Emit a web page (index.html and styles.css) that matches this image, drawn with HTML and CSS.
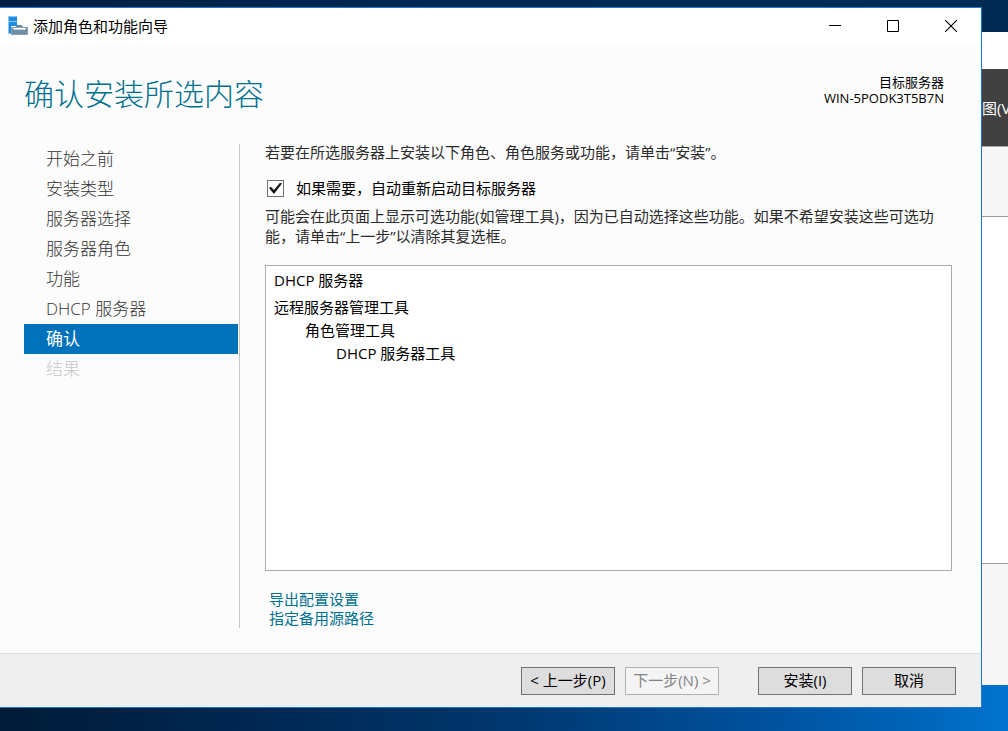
FILE: index.html
```html
<!DOCTYPE html>
<html lang="zh-CN">
<head>
<meta charset="utf-8">
<title>添加角色和功能向导</title>
<link rel="stylesheet" href="styles.css">
</head>
<body class="desktop">
  <div class="manager">
    <div class="manager-title"></div>
    <div class="manager-menu"><span class="manager-menu-item">图(V)</span></div>
    <div class="manager-toolbar"></div>
    <div class="manager-main"></div>
    <div class="manager-bottom"></div>
  </div>

  <main class="wizard">
    <div class="titlebar">
      <svg class="app-icon" width="20" height="20" viewBox="0 0 20 20" aria-hidden="true">
        <path fill="#8cc8f2" d="M0 0h9v18H0z"/>
        <path fill="#1d8ce0" d="M1 1h8v4H1zM1 6h8v11H1z"/>
        <path fill="#fff" d="M3 10h6v8H3z"/>
        <path fill="#8ba3b6" d="M3 11h17v8H3z"/>
        <path fill="#6f8da5" d="M9 9h5v1h1v1H8v-1h1zM4 12h15v6H4z"/>
        <path fill="#fff" d="M5 12h13v1H5zM6 13h1v1H6zM16 13h1v1h-1z"/>
        <path fill="#c5d0d9" d="M7 13h9v1H7z"/>
      </svg>
      <span class="titlebar-text">添加角色和功能向导</span>
      <div class="window-buttons">
        <button class="window-button" type="button" aria-label="最小化">
          <svg width="12" height="12" viewBox="0 0 12 12"><path fill="#000" d="M0 5h12v1H0z"/></svg>
        </button>
        <button class="window-button" type="button" aria-label="最大化">
          <svg width="12" height="12" viewBox="0 0 12 12"><path fill="none" stroke="#000" d="M.5.5h11v11H.5z"/></svg>
        </button>
        <button class="window-button" type="button" aria-label="关闭">
          <svg width="12" height="12" viewBox="0 0 12 12"><path fill="none" stroke="#000" stroke-width="1.1" d="M0 0l12 12M12 0L0 12"/></svg>
        </button>
      </div>
    </div>

    <header class="header">
      <h1 class="page-title">确认安装所选内容</h1>
      <div class="target">
        <div>目标服务器</div>
        <div>WIN-5PODK3T5B7N</div>
      </div>
    </header>

    <div class="body">
      <nav class="steps">
        <a class="step" href="#">开始之前</a>
        <a class="step" href="#">安装类型</a>
        <a class="step" href="#">服务器选择</a>
        <a class="step" href="#">服务器角色</a>
        <a class="step" href="#">功能</a>
        <a class="step" href="#">DHCP 服务器</a>
        <a class="step step-current" href="#" aria-current="step">确认</a>
        <a class="step step-disabled" aria-disabled="true">结果</a>
      </nav>

      <section class="content">
        <p class="text">若要在所选服务器上安装以下角色、角色服务或功能，请单击“安装”。</p>
        <label class="restart" for="restart">
          <input class="checkbox" type="checkbox" id="restart" checked>
          <span>如果需要，自动重新启动目标服务器</span>
        </label>
        <p class="text">可能会在此页面上显示可选功能(如管理工具)，因为已自动选择这些功能。如果不希望安装这些可选功能，请单击“上一步”以清除其复选框。</p>
        <ul class="selection">
          <li class="selection-group">DHCP 服务器</li>
          <li>远程服务器管理工具
            <ul class="selection-sub">
              <li>角色管理工具
                <ul class="selection-sub">
                  <li>DHCP 服务器工具</li>
                </ul>
              </li>
            </ul>
          </li>
        </ul>
        <div class="links">
          <a class="link" href="#">导出配置设置</a>
          <a class="link" href="#">指定备用源路径</a>
        </div>
      </section>
    </div>

    <footer class="footer">
      <div class="button-group">
        <button class="button" type="button">&lt; 上一步(P)</button>
        <button class="button" type="button" disabled>下一步(N) &gt;</button>
      </div>
      <div class="button-group">
        <button class="button" type="button">安装(I)</button>
        <button class="button" type="button">取消</button>
      </div>
    </footer>
  </main>
</body>
</html>
```

FILE: styles.css
```css
* {
  box-sizing: border-box;
}

.desktop {
  position: relative;
  height: 100vh;
  margin: 0;
  overflow: hidden;
  background:
    linear-gradient(90deg, #001f42 0%, #002a55 50%, #002b55 100%) top / 100% 50% no-repeat,
    linear-gradient(90deg, #001b38 0%, #002752 25%, #00356b 48%, #00509c 75%, #0066bb 92%, #0074d0 100%) bottom / 100% 50% no-repeat;
  color: #000;
  font: 15px/20px "Open Sans", "Noto Sans CJK SC", sans-serif;
}

/* Server manager window in the background */
.manager {
  position: absolute;
  inset: 32px 0 46px;
  display: flex;
  flex-direction: column;
  align-items: stretch;
  background: #f7f7f7;
}

.manager-title {
  height: 37px;
  background: #fff;
}

.manager-menu {
  display: flex;
  align-items: center;
  justify-content: flex-end;
  height: 77px;
  overflow: hidden;
  background: #414141;
  color: #fff;
}

.manager-menu-item {
  width: 26px;
  white-space: nowrap;
}

.manager-toolbar {
  height: 71px;
  border-top: 1px solid #a6a6a6;
  border-bottom: 1px solid #999;
}

.manager-main {
  flex: 1;
  border-bottom: 1px solid #999;
  background: #fff;
}

.manager-bottom {
  height: 121px;
}

/* Wizard window */
.wizard {
  position: absolute;
  inset: 7px 26px 23px 0;
  display: flex;
  flex-direction: column;
  border: 1px solid #1c78c8;
  border-left: 0;
  background: #fcfcfc;
}

.titlebar {
  display: flex;
  align-items: center;
  height: 37px;
  padding: 0 1px 1px 8px;
  background: #fff;
}

.app-icon {
  margin-right: 5px;
}

.titlebar-text {
  flex: 1;
}

.window-buttons {
  display: flex;
}

.window-button {
  display: grid;
  place-items: center;
  width: 58px;
  height: 36px;
  padding: 0;
  border: 0;
  background: none;
}

.header {
  display: flex;
  justify-content: space-between;
  padding: 29px 37px 28px 24px;
}

.page-title {
  margin: 0;
  color: #00708f;
  font-size: 30px;
  font-weight: 300;
  line-height: 40px;
}

.target {
  font-size: 13px;
  line-height: 16px;
  text-align: right;
}

.body {
  display: flex;
  flex: 1;
  padding: 0 29px 25px 24px;
}

.steps {
  width: 216px;
  margin-top: 2px;
  padding-right: 1px;
  border-right: 1px solid #c8c8c8;
}

.step {
  display: block;
  padding-left: 22px;
  color: #333;
  font-size: 17px;
  font-weight: 300;
  line-height: 30px;
  text-decoration: none;
}

.step-current {
  background: #0072bc;
  color: #fff;
  font-weight: 400;
}

.step-disabled {
  color: #c8c8c8;
}

.content {
  display: flex;
  flex: 1;
  flex-direction: column;
  padding-left: 25px;
}

.text {
  margin: 0;
  padding-right: 10px;
  color: #2b2b2b;
}

.restart {
  display: flex;
  align-items: center;
  gap: 12px;
  margin: 16px 0 8px;
  padding-left: 2px;
}

.checkbox {
  display: grid;
  place-items: center;
  width: 17px;
  height: 17px;
  margin: 0;
  border: 1px solid #707070;
  background: #fff;
  appearance: none;
}

.checkbox:checked::before {
  width: 13px;
  height: 11px;
  background: #1a1a1a;
  clip-path: polygon(0 50%, 15% 38%, 38% 68%, 86% 0, 100% 10%, 42% 100%, 34% 100%);
  content: "";
}

.selection,
.selection-sub {
  margin: 0;
  padding: 0;
  list-style: none;
}

.selection {
  flex: 1;
  margin-top: 19px;
  padding: 3px 8px;
  border: 1px solid #acacac;
  background: #fff;
  line-height: 23px;
}

.selection-group {
  margin-bottom: 4px;
}

.selection-sub {
  padding-left: 31px;
}

.links {
  display: flex;
  flex-direction: column;
  align-items: flex-start;
  margin-top: 19px;
  padding-left: 4px;
  line-height: 19px;
}

.link {
  color: #00708f;
  text-decoration: none;
}

.footer {
  display: flex;
  justify-content: flex-end;
  gap: 39px;
  padding: 13px 25px 12px;
  border-top: 1px solid #dfdfdf;
  background: #efefef;
}

.button-group {
  display: flex;
  gap: 10px;
}

.button {
  width: 94px;
  height: 28px;
  padding: 0 0 2px;
  border: 1px solid #707070;
  background: #ddd;
  color: #000;
  font: inherit;
  white-space: nowrap;
}

.button:disabled {
  border-color: #adb2b5;
  background: #f4f4f4;
  color: #838383;
}
```
